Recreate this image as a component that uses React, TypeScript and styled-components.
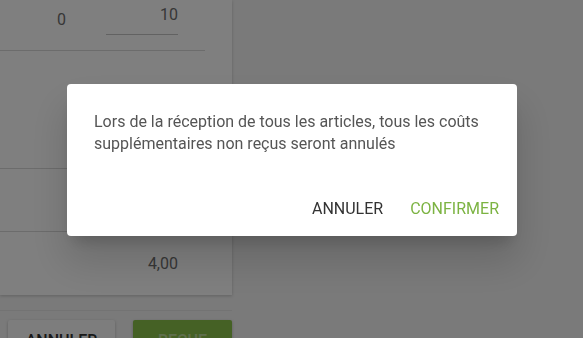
import React from "react";
import styled, { createGlobalStyle } from "styled-components";

const Global = createGlobalStyle`
  html, body { margin: 0; padding: 0; }
  body {
    background: #f4f4f4;
    font-family: Roboto, "Noto Sans", sans-serif;
    width: 583px;
    height: 338px;
    overflow: hidden;
  }
`;

const Page = styled.div`
  display: flex;
  flex-direction: column;
  width: 232px;
`;

const Card = styled.div`
  background: #fff;
  width: 232px;
  box-shadow: 0 1px 3px rgba(0, 0, 0, 0.2);
  display: flex;
  flex-direction: column;
`;

const Row = styled.div<{ $h: number; $last?: boolean }>`
  width: 205px;
  height: ${(p) => p.$h}px;
  border-bottom: 1px solid ${(p) => (p.$last ? "transparent" : "#d8d8d8")};
  display: flex;
  align-items: center;
  box-sizing: border-box;
`;

const TopRow = styled.div`
  width: 205px;
  height: 51px;
  border-bottom: 1px solid #d8d8d8;
  display: flex;
  align-items: flex-start;
  box-sizing: border-box;
`;

const Cell = styled.div<{ $w: number; $top?: number }>`
  width: ${(p) => p.$w}px;
  margin-top: ${(p) => p.$top ?? 0}px;
  text-align: right;
  font-size: 16px;
  color: #6e6e6e;
`;

const InputCell = styled.div`
  margin-left: 40px;
  width: 72px;
  height: 35px;
  border-bottom: 1px solid #c4c4c4;
  box-sizing: border-box;
  display: flex;
  align-items: flex-start;
  justify-content: flex-end;
  font-size: 16px;
  color: #6e6e6e;
  padding-top: 5px;
`;

const Separator = styled.div`
  height: 1px;
  background: #e6e6e6;
  margin-top: 15px;
  width: 232px;
`;

const Actions = styled.div`
  display: flex;
  gap: 18px;
  padding: 9px 0 0 8px;
`;

const PageButton = styled.button<{ $primary?: boolean }>`
  height: 36px;
  border: none;
  border-radius: 2px;
  font-family: Roboto, sans-serif;
  font-size: 16px;
  font-weight: 500;
  padding: 0;
  width: ${(p) => (p.$primary ? "99px" : "107px")};
  background: ${(p) => (p.$primary ? "#8bc34a" : "#fafafa")};
  color: ${(p) => (p.$primary ? "rgba(255,255,255,0.45)" : "#333")};
  box-shadow: 0 1px 3px rgba(0, 0, 0, 0.25);
  display: flex;
  justify-content: center;
  padding-top: 11px;
  box-sizing: border-box;
`;

const Overlay = styled.div`
  position: fixed;
  inset: 0;
  background: rgba(0, 0, 0, 0.5);
  display: flex;
  align-items: flex-start;
  justify-content: center;
  padding-top: 84px;
`;

const Dialog = styled.div`
  width: 450px;
  height: 152px;
  box-sizing: border-box;
  background: #fff;
  border-radius: 4px;
  box-shadow: 0 11px 15px -7px rgba(0,0,0,0.2), 0 24px 38px 3px rgba(0,0,0,0.14);
  display: flex;
  flex-direction: column;
  margin-left: 1px;
`;

const Message = styled.p`
  margin: 0;
  padding: 27px 27px 0 27px;
  font-size: 16px;
  line-height: 22px;
  color: #555;
  flex: 1;
`;

const DialogActions = styled.div`
  display: flex;
  justify-content: flex-end;
  gap: 11px;
  padding: 0 10px 12px 0;
`;

const TextButton = styled.button<{ $accent?: boolean }>`
  border: none;
  background: transparent;
  font-family: Roboto, sans-serif;
  font-size: 16px;
  font-weight: 400;
  padding: 6px 8px;
  color: ${(p) => (p.$accent ? "#7cb342" : "#333")};
`;

export default function App() {
  return (
    <>
      <Global />
      <Page>
        <Card>
          <TopRow>
            <Cell $w={66} $top={10}>0</Cell>
            <InputCell>10</InputCell>
          </TopRow>
          <Row $h={118} />
          <Row $h={63} />
          <Row $h={63} $last>
            <Cell $w={178}>4,00</Cell>
          </Row>
        </Card>
        <Separator />
        <Actions>
          <PageButton>ANNULER</PageButton>
          <PageButton $primary>REÇUE</PageButton>
        </Actions>
      </Page>
      <Overlay>
        <Dialog>
          <Message>
            Lors de la réception de tous les articles, tous les coûts supplémentaires non reçus seront annulés
          </Message>
          <DialogActions>
            <TextButton>ANNULER</TextButton>
            <TextButton $accent>CONFIRMER</TextButton>
          </DialogActions>
        </Dialog>
      </Overlay>
    </>
  );
}
